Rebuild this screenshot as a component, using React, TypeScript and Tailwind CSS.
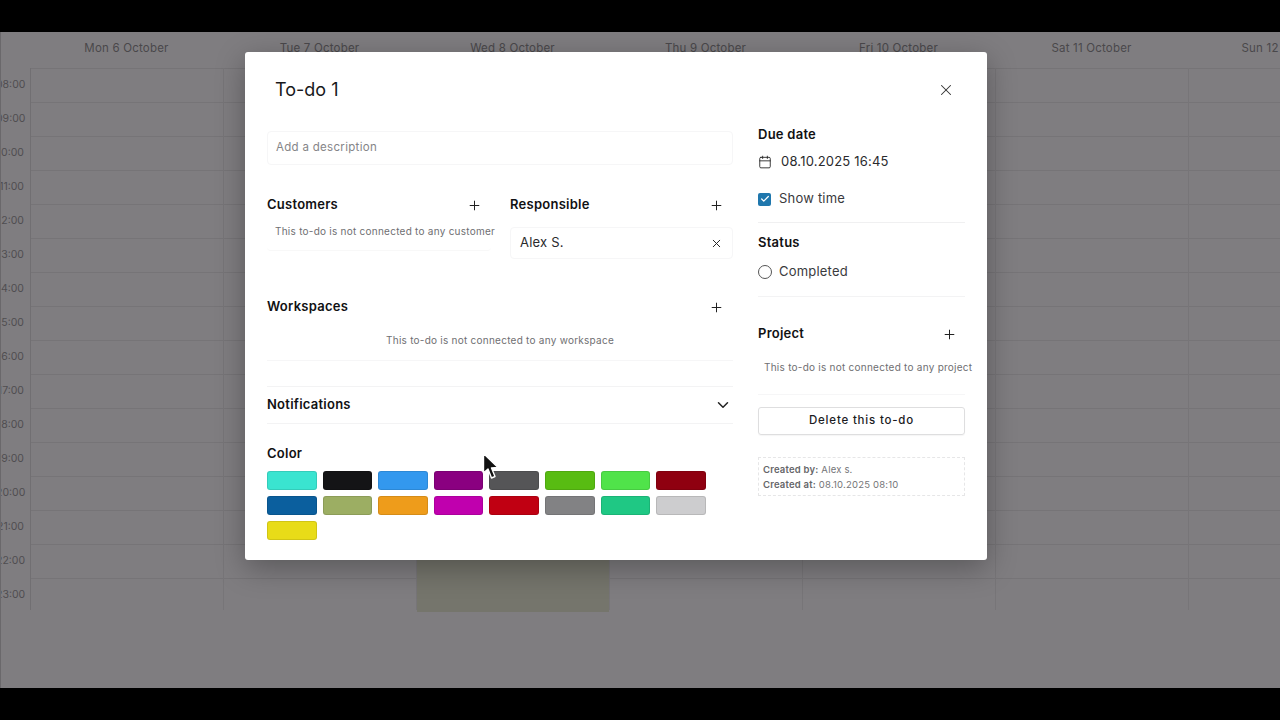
import { Calendar, Check, ChevronDown, Plus, X } from "lucide-react";

const days = ["Mon 6 October", "Tue 7 October", "Wed 8 October", "Thu 9 October", "Fri 10 October", "Sat 11 October", "Sun 12 October"];
const hours = ["08:00", "09:00", "10:00", "11:00", "12:00", "13:00", "14:00", "15:00", "16:00", "17:00", "18:00", "19:00", "20:00", "21:00", "22:00", "23:00"];
const colors = [
  "bg-[#3ae4d0]", "bg-[#141416]", "bg-[#3398ee]", "bg-[#8a0080]", "bg-[#555557]", "bg-[#58bc12]", "bg-[#50e34a]", "bg-[#8f0010]",
  "bg-[#0b5f9e]", "bg-[#9cae63]", "bg-[#ee9c1b]", "bg-[#c000ae]", "bg-[#c00012]", "bg-[#828284]", "bg-[#1fc884]", "bg-[#cdcdcf]",
  "bg-[#e8dc18]",
];

function Calendar_() {
  return (
    <div className="h-[656px] bg-[#7f7d80] overflow-hidden border-l border-[#6a686b]">
      {/* day headers */}
      <div className="flex h-[36px] pl-[29px] w-[1400px]">
        {days.map((d) => (
          <div key={d} className="w-[193px] shrink-0 pt-[9px] text-center text-[11.5px] leading-[14px] tracking-[0.2px] text-[#4a484b]">
            {d}
          </div>
        ))}
      </div>
      {/* hour rows */}
      <div className="flex w-[1400px] h-[542px]">
        <div className="w-[29px] shrink-0 -ml-[5px] mr-[5px]">
          {hours.map((h) => (
            <div key={h} className="h-[34px] pt-[10px] text-right pr-[1px] text-[10.5px] leading-[13px] text-[#4f4d50]">
              {h}
            </div>
          ))}
        </div>
        {days.map((d, i) => (
          <div key={d} className={`relative w-[193px] shrink-0 border-l ${i === 0 ? "border-[#716f72]" : "border-[#777578]"}`}>
            {hours.map((h) => (
              <div key={h} className="h-[34px] border-t border-[#767477]" />
            ))}
            {i === 2 && <div className="absolute left-0 right-0 top-[476px] h-[68px] bg-[#75756c]" />}
          </div>
        ))}
      </div>
    </div>
  );
}

function SectionHead({ title, plusPad = "pr-[9px]" }: { title: string; plusPad?: string }) {
  return (
    <div className={`flex items-center justify-between h-[20px] ${plusPad}`}>
      <span className="text-[13px] font-semibold tracking-[0.25px] text-[#111113]">{title}</span>
      <Plus size={15} strokeWidth={1.6} className="text-[#222]" />
    </div>
  );
}

function Modal() {
  return (
    <div className="absolute left-[245px] top-[52px] w-[742px] h-[508px] bg-white rounded-[3px] shadow-[0_8px_30px_rgba(0,0,0,0.3)] flex pl-[22px] pr-[22px]">
      {/* left column */}
      <div className="w-[466px] shrink-0">
        <div className="h-[79px] pt-[26px] pl-[8px] text-[18px] leading-[24px] text-[#18181b]">To-do 1</div>
        <div className="h-[34px] rounded-[4px] border border-[#f6f6f7] pl-[8px] flex items-center text-[11.5px] tracking-[0.3px] text-[#858588]">
          Add a description
        </div>
        <div className="flex gap-[19px] mt-[30px]">
          <div className="w-[224px]">
            <SectionHead title="Customers" />
            <div className="mt-[4px] h-[32px] pl-[8px] pt-[4px] rounded-[4px] border-b border-[#f8f8f8] text-[10px] leading-[16px] tracking-[0.25px] text-[#6f6f72] whitespace-nowrap">
              This to-do is not connected to any customer
            </div>
          </div>
          <div className="w-[224px]">
            <SectionHead title="Responsible" />
            <div className="mt-[12px] h-[32px] rounded-[4px] border border-[#f6f6f7] pl-[9px] pr-[9px] flex items-center justify-between text-[13px] tracking-[0.2px] text-[#2a2a2d]">
              Alex S.
              <X size={13} strokeWidth={1.8} className="text-[#222]" />
            </div>
          </div>
        </div>
        <div className="mt-[38px]">
          <SectionHead title="Workspaces" />
          <div className="mt-[6px] h-[38px] pt-[9px] border-b border-[#f6f6f7] text-center text-[10px] leading-[16px] tracking-[0.25px] text-[#6f6f72]">
            This to-do is not connected to any workspace
          </div>
        </div>
        <div className="mt-[25px] h-[38px] border-y border-[#f3f3f4] flex items-center justify-between pr-[1px]">
          <span className="text-[13px] font-semibold tracking-[0.25px] text-[#111113]">Notifications</span>
          <ChevronDown size={18} strokeWidth={2} className="text-[#222]" />
        </div>
        <div className="mt-[19px] text-[13px] leading-[20px] font-semibold tracking-[0.25px] text-[#111113]">Color</div>
        <div className="mt-[8px] grid grid-cols-[repeat(8,49.6px)] gap-x-[6px] gap-y-[6px]">
          {colors.map((c) => (
            <div key={c} className={`${c} h-[19px] rounded-[3px] border border-black/10`} />
          ))}
        </div>
      </div>

      {/* right column */}
      <div className="w-[207px] ml-[25px] shrink-0 relative">
        <X size={18} strokeWidth={1.4} className="absolute left-[179px] top-[29px] text-[#333]" />
        <div className="mt-[72px] text-[13px] leading-[20px] font-semibold tracking-[0.25px] text-[#111113]">Due date</div>
        <div className="mt-[8px] h-[20px] flex items-center gap-[9px] text-[13px] tracking-[0.2px] text-[#2a2a2d]">
          <Calendar size={14} strokeWidth={1.5} className="text-[#222]" />
          08.10.2025 16:45
        </div>
        <div className="mt-[17px] h-[20px] flex items-center gap-[8px] text-[13px] tracking-[0.2px] text-[#3a3a3d]">
          <span className="w-[13px] h-[13px] rounded-[2px] bg-[#1f77ad] flex items-center justify-center">
            <Check size={10} strokeWidth={3} className="text-white" />
          </span>
          Show time
        </div>
        <div className="mt-[13px] border-t border-[#f0f0f1]" />
        <div className="mt-[9px] text-[13px] leading-[20px] font-semibold tracking-[0.25px] text-[#111113]">Status</div>
        <div className="mt-[10px] h-[20px] flex items-center gap-[7px] text-[13px] tracking-[0.2px] text-[#3a3a3d]">
          <span className="w-[14px] h-[14px] rounded-full border border-[#555]" />
          Completed
        </div>
        <div className="mt-[14px] border-t border-[#f3f3f4]" />
        <div className="mt-[27px]">
          <SectionHead title="Project" plusPad="pr-[8px]" />
        </div>
        <div className="mt-[14px] h-[37px] pt-[1px] pl-[6px] border-b border-[#f6f6f7] text-[10px] leading-[16px] tracking-[0.25px] text-[#6f6f72] whitespace-nowrap">
          This to-do is not connected to any project
        </div>
        <button className="mt-[12px] w-full h-[28px] rounded-[3px] border border-[#dededf] text-[11.5px] font-medium tracking-[0.8px] text-[#1c1c1f] shadow-[0_1px_1px_rgba(0,0,0,0.04)]">
          Delete this to-do
        </button>
        <div className="mt-[22px] h-[39px] border border-dashed border-[#e6e6e7] px-[4px] pt-[4px] text-[9.5px] leading-[15px] tracking-[0.2px] text-[#757578]">
          <div><span className="font-semibold text-[#666669]">Created by:</span> Alex s.</div>
          <div><span className="font-semibold text-[#666669]">Created at:</span> 08.10.2025 08:10</div>
        </div>
      </div>
    </div>
  );
}

export default function App() {
  return (
    <div className="relative w-[1280px] h-[720px] overflow-hidden bg-black font-['Inter',sans-serif]">
      <div className="h-[32px]" />
      <Calendar_ />
      <Modal />
      {/* mouse cursor */}
      <svg className="absolute left-[482px] top-[452px]" width="18" height="28" viewBox="0 0 18 28">
        <path d="M1.5 1.5 L1.5 21 L6 17 L9.5 26 L13 24.5 L9.5 16 L16 15.5 Z" fill="#111" stroke="#fff" strokeWidth="1.4" strokeLinejoin="round" />
      </svg>
    </div>
  );
}
